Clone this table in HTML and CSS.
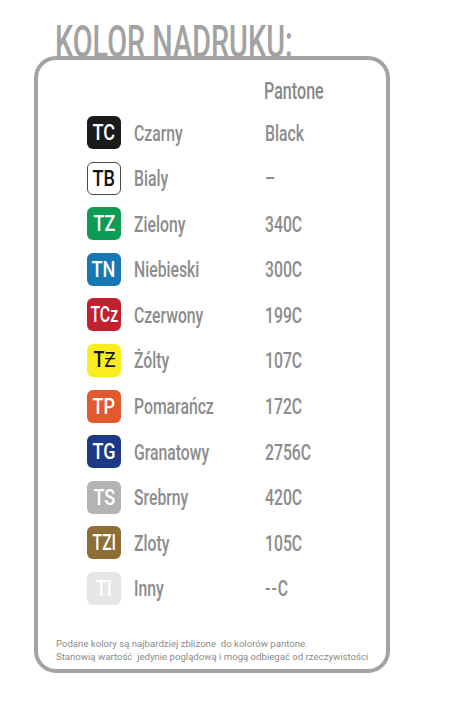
FILE: index.html
```html
<!DOCTYPE html>
<html lang="pl">
<head>
<meta charset="utf-8">
<link rel="stylesheet" href="styles.css">
</head>
<body>
<div class="page">
  <h1 class="title"><span class="sx sx-title">KOLOR NADRUKU:</span></h1>
  <div class="card">
    <div class="head"><span class="sx">Pantone</span></div>
    <ul class="rows">
      <li class="row"><span class="badge b-tc"><span class="sx sx-c">TC</span></span><span class="name"><span class="sx">Czarny</span></span><span class="code"><span class="sx">Black</span></span></li>
      <li class="row"><span class="badge b-tb"><span class="sx sx-c">TB</span></span><span class="name"><span class="sx">Bialy</span></span><span class="code"><span class="sx">–</span></span></li>
      <li class="row"><span class="badge b-tz"><span class="sx sx-c">TZ</span></span><span class="name"><span class="sx">Zielony</span></span><span class="code"><span class="sx">340C</span></span></li>
      <li class="row"><span class="badge b-tn"><span class="sx sx-c">TN</span></span><span class="name"><span class="sx">Niebieski</span></span><span class="code"><span class="sx">300C</span></span></li>
      <li class="row"><span class="badge b-tcz"><span class="sx sx-c sx-tight">TCz</span></span><span class="name"><span class="sx">Czerwony</span></span><span class="code"><span class="sx">199C</span></span></li>
      <li class="row"><span class="badge b-tzo"><span class="sx sx-c">TƵ</span></span><span class="name"><span class="sx">Żólty</span></span><span class="code"><span class="sx">107C</span></span></li>
      <li class="row"><span class="badge b-tp"><span class="sx sx-c">TP</span></span><span class="name"><span class="sx">Pomarańcz</span></span><span class="code"><span class="sx">172C</span></span></li>
      <li class="row"><span class="badge b-tg"><span class="sx sx-c">TG</span></span><span class="name"><span class="sx">Granatowy</span></span><span class="code"><span class="sx">2756C</span></span></li>
      <li class="row"><span class="badge b-ts"><span class="sx sx-c">TS</span></span><span class="name"><span class="sx">Srebrny</span></span><span class="code"><span class="sx">420C</span></span></li>
      <li class="row"><span class="badge b-tzl"><span class="sx sx-c sx-tight">TZl</span></span><span class="name"><span class="sx">Zloty</span></span><span class="code"><span class="sx">105C</span></span></li>
      <li class="row"><span class="badge b-ti"><span class="sx sx-c">TI</span></span><span class="name"><span class="sx">Inny</span></span><span class="code"><span class="sx dashes">--C</span></span></li>
    </ul>
    <p class="note">Podane kolory są najbardziej zbliżone&nbsp; do kolorów pantone.<br>Stanowią wartość &nbsp;jedynie poglądową i mogą odbiegać od rzeczywistości</p>
  </div>
</div>
</body>
</html>
```

FILE: styles.css
```css
* { box-sizing: border-box; }
html, body { margin: 0; padding: 0; background: #ffffff; }
body { font-family: Roboto, "Liberation Sans", sans-serif; color: #8c8c8c; }

.page { width: 454px; height: 714px; padding-top: 19px; }

.sx {
  display: inline-block;
  transform: scaleX(0.7);
  transform-origin: left center;
  white-space: nowrap;
}
.sx-c { transform: scaleX(0.82); transform-origin: center center; }
.sx-tight { transform: scaleX(0.72); }
.dashes { letter-spacing: 1.5px; }

.title {
  margin: 0 0 0 55px;
  height: 37px;
  font-size: 45px;
  line-height: 45px;
  font-weight: 500;
  color: #a2a2a2;
  white-space: nowrap;
}
.sx-title { transform: scaleX(0.64); }

.card {
  margin-left: 34px;
  width: 356px;
  height: 617px;
  border: 4px solid #a3a3a3;
  border-radius: 22px;
  padding: 20px 0 0 0;
}

.head {
  margin-left: 226px;
  font-size: 23px;
  line-height: 23px;
  font-weight: 500;
  color: #888888;
}

.rows {
  list-style: none;
  margin: 13px 0 0 0;
  padding: 0 0 0 49px;
  display: flex;
  flex-direction: column;
  gap: 12.6px;
}

.row {
  display: flex;
  align-items: center;
  height: 33px;
  font-size: 22.5px;
  font-weight: 500;
}

.badge {
  flex: none;
  width: 34px;
  height: 33px;
  border-radius: 6px;
  display: flex;
  align-items: center;
  justify-content: center;
  color: #ffffff;
  font-size: 22px;
  font-weight: 500;
  overflow: hidden;
}

.name { width: 131px; margin-left: 13px; color: #8c8c8c; }
.code { color: #8c8c8c; }

.b-tc { background: #1b1b1b; }
.b-tb { background: #ffffff; border: 1px solid #4a4a4a; color: #111111; }
.b-tz { background: #0c9c55; }
.b-tn { background: #1679b5; }
.b-tcz { background: #c1202f; }
.b-tzo { background: #f9ec1f; color: #111111; }
.b-tp { background: #e15a2f; }
.b-tg { background: #1e3985; }
.b-ts { background: #b3b3b3; }
.b-tzl { background: #8d6f35; }
.b-ti { background: #e6e6e6; }

.note {
  margin: 32px 0 0 18px;
  font-size: 9.6px;
  line-height: 13px;
  color: #8a8a8a;
  white-space: nowrap;
}
```
